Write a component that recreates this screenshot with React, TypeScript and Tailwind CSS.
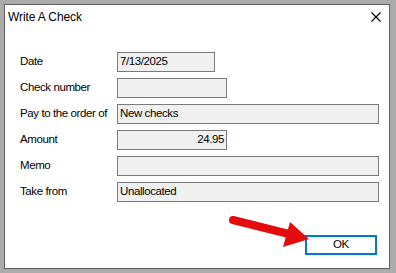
import React from "react";

const rows = [
  { label: "Date", value: "7/13/2025", width: "w-[98px]" },
  { label: "Check number", value: "", width: "w-[110px]" },
  { label: "Pay to the order of", value: "New checks", width: "w-[262px]" },
  { label: "Amount", value: "24.95", width: "w-[110px]", right: true },
  { label: "Memo", value: "", width: "w-[262px]" },
  { label: "Take from", value: "Unallocated", width: "w-[262px]" },
];

const App: React.FC = () => {
  return (
    <div
      className="relative w-[396px] h-[273px] bg-[#ababab] pl-1 pt-1 text-[11.5px] tracking-[-0.4px] text-black"
      style={{ fontFamily: "'Liberation Sans', Arial, sans-serif" }}
    >
      {/* Dialog window */}
      <div className="w-[386px] h-[265px] bg-white border border-[#5f5f5f] flex flex-col">
        {/* Title bar */}
        <div className="flex items-center justify-between h-[24px] pl-[3px] pr-[8px]">
          <span className="text-[12px] tracking-[-0.1px]">Write A Check</span>
          <svg width="10" height="10" viewBox="0 0 10 10">
            <path d="M0.5 0.5 L9.5 9.5 M9.5 0.5 L0.5 9.5" stroke="#000" strokeWidth="1.1" />
          </svg>
        </div>

        {/* Form */}
        <div className="flex flex-col gap-[6px] mt-[23px] pl-[15px]">
          {rows.map((row) => (
            <div key={row.label} className="flex items-center h-[20px]">
              <span className="w-[97px] whitespace-nowrap">{row.label}</span>
              <div
                className={`${row.width} h-[20px] bg-[#f0f0f0] border border-[#7a7a7a] flex items-center px-[2px] ${
                  row.right ? "justify-end" : ""
                }`}
              >
                {row.value}
              </div>
            </div>
          ))}
        </div>

        {/* Buttons */}
        <div className="flex justify-end mt-[33px] pr-[12px]">
          <button className="w-[72px] h-[20px] bg-white border-2 border-[#0078d7] flex items-center justify-center">
            OK
          </button>
        </div>
      </div>

      {/* Red pointer arrow */}
      <svg className="absolute left-0 top-0 pointer-events-none" width="396" height="273">
        <line x1="233" y1="220" x2="289" y2="234" stroke="#e30b0b" strokeWidth="8" strokeLinecap="round" />
        <polygon points="290,222 309,239 283,247" fill="#e30b0b" />
      </svg>
    </div>
  );
};

export default App;
